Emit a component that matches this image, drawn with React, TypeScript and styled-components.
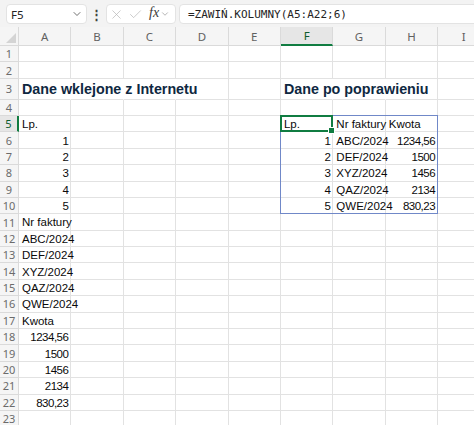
import styled, { createGlobalStyle } from 'styled-components';
import { ChevronDown, X, Check } from 'lucide-react';

const GlobalStyle = createGlobalStyle`
  html, body {
    margin: 0;
    padding: 0;
    background: #ffffff;
  }
  body {
    font-family: 'Liberation Sans', Arial, sans-serif;
  }
`;

const COLS = ['A', 'B', 'C', 'D', 'E', 'F', 'G', 'H', 'I'];
const ROW_COUNT = 23;
const ROW_H = 16.4;
const TITLE_ROW_H = 20.8;
const COL_W = 52.4;

type CellDef = {
  text: string;
  align?: 'left' | 'right';
  title?: boolean;
};

const invoices = ['ABC/2024', 'DEF/2024', 'XYZ/2024', 'QAZ/2024', 'QWE/2024'];
const amounts = ['1234,56', '1500', '1456', '2134', '830,23'];

const CELLS: Record<string, CellDef> = {
  A3: { text: 'Dane wklejone z Internetu', title: true },
  F3: { text: 'Dane po poprawieniu', title: true },
  A5: { text: 'Lp.' },
  A11: { text: 'Nr faktury' },
  A17: { text: 'Kwota' },
  F5: { text: 'Lp.' },
  G5: { text: 'Nr faktury' },
  H5: { text: 'Kwota' },
};
for (let i = 0; i < 5; i++) {
  CELLS[`A${6 + i}`] = { text: String(i + 1), align: 'right' };
  CELLS[`A${12 + i}`] = { text: invoices[i] };
  CELLS[`A${18 + i}`] = { text: amounts[i], align: 'right' };
  CELLS[`F${6 + i}`] = { text: String(i + 1), align: 'right' };
  CELLS[`G${6 + i}`] = { text: invoices[i] };
  CELLS[`H${6 + i}`] = { text: amounts[i], align: 'right' };
}

// cells whose right gridline is hidden by overflowing title text
const OVERFLOWED = new Set(['A3', 'B3', 'C3', 'F3', 'G3']);

const Page = styled.div`
  width: 474px;
  height: 425px;
  overflow: hidden;
  background: #ffffff;
`;

const Toolbar = styled.div`
  height: 27px;
  box-sizing: border-box;
  padding: 4px 0 3px 6px;
  display: flex;
  align-items: stretch;
  gap: 0;
  background: #f3f3f3;
`;

const FieldBox = styled.div<{ $width?: number }>`
  ${p => (p.$width ? `width: ${p.$width}px;` : 'flex: 1; margin-right: -12px;')}
  box-sizing: border-box;
  background: #ffffff;
  border: 1px solid #e3e3e3;
  border-radius: 4px;
  display: flex;
  align-items: center;
`;

const NameText = styled.span`
  flex: 1;
  padding-left: 4px;
  font-family: 'Noto Sans', 'Liberation Sans', sans-serif;
  font-size: 11.5px;
  color: #242424;
`;

const Dots = styled.div`
  width: 19px;
  display: flex;
  align-items: center;
  justify-content: center;
  font-size: 13px;
  font-weight: bold;
  color: #424242;
`;

const IconSlot = styled.span<{ $w: number; $tone?: string }>`
  width: ${p => p.$w}px;
  display: flex;
  align-items: center;
  justify-content: center;
  color: ${p => p.$tone ?? '#b4b4b4'};
`;

const FxText = styled.span`
  font-family: 'Liberation Serif', 'Times New Roman', serif;
  font-style: italic;
  font-size: 14px;
  color: #3b3b3b;
  padding: 0 1px 2px 4px;
`;

const Spacer = styled.div`
  width: 3px;
`;

const FormulaText = styled.span`
  padding-left: 8px;
  font-family: 'DejaVu Sans Mono', monospace;
  font-size: 11px;
  color: #242424;
  white-space: nowrap;
`;

const Sheet = styled.div`
  display: grid;
  grid-template-columns: 19px repeat(${COLS.length}, ${COL_W}px);
  grid-template-rows: 19px repeat(2, ${ROW_H}px) ${TITLE_ROW_H}px repeat(${ROW_COUNT - 3}, ${ROW_H}px);
`;

const Corner = styled.div`
  grid-column: 1;
  grid-row: 1;
  background: #f5f5f5;
  border-right: 1px solid #dadada;
  border-bottom: 1px solid #dadada;
  box-sizing: border-box;
  display: flex;
  align-items: flex-end;
  justify-content: flex-end;
  padding: 0 2px 2px 0;
`;

const CornerTriangle = styled.div`
  width: 0;
  height: 0;
  border-left: 10px solid transparent;
  border-bottom: 10px solid #d4d4d4;
`;

const ColHeader = styled.div<{ $active?: boolean }>`
  grid-row: 1;
  background: ${p => (p.$active ? '#e6e6e6' : '#f5f5f5')};
  border-right: 1px solid #dadada;
  border-bottom: ${p => (p.$active ? '2px solid #107c41' : '1px solid #dadada')};
  box-sizing: border-box;
  display: flex;
  align-items: center;
  justify-content: center;
  font-family: 'Noto Sans', 'Liberation Sans', sans-serif;
  font-size: 11.5px;
  color: ${p => (p.$active ? '#0e5c2f' : '#616161')};
`;

const RowHeader = styled.div<{ $active?: boolean }>`
  grid-column: 1;
  background: ${p => (p.$active ? '#e6e6e6' : '#f5f5f5')};
  border-right: ${p => (p.$active ? '2px solid #107c41' : '1px solid #dadada')};
  border-bottom: 1px solid #dadada;
  box-sizing: border-box;
  display: flex;
  align-items: center;
  justify-content: center;
  font-family: 'Noto Sans', 'Liberation Sans', sans-serif;
  font-size: 11px;
  color: ${p => (p.$active ? '#0e5c2f' : '#6b6b6b')};
`;

const Cell = styled.div<{ $align: 'left' | 'right'; $title?: boolean; $noRight?: boolean }>`
  min-width: 0;
  box-sizing: border-box;
  border-right: 1px solid ${p => (p.$noRight ? 'transparent' : '#e2e2e2')};
  border-bottom: 1px solid #e2e2e2;
  display: flex;
  align-items: flex-end;
  justify-content: ${p => (p.$align === 'right' ? 'flex-end' : 'flex-start')};
  padding: ${p => (p.$title ? '0 0 1px 3px' : '0 2px 0 3px')};
  white-space: nowrap;
  overflow: visible;
  z-index: ${p => (p.$title ? 2 : 1)};
  font-size: ${p => (p.$title ? '14.3px' : '11.5px')};
  font-weight: ${p => (p.$title ? 700 : 400)};
  color: ${p => (p.$title ? '#0e2841' : '#0a0a0a')};
  line-height: 1.15;
  letter-spacing: ${p => (p.$align === 'right' ? '-0.5px' : '0')};
`;

const SpillFrame = styled.div`
  grid-column: 7 / 10;
  grid-row: 6 / 12;
  margin: -1px 0 0 -1px;
  border: 1px solid #7088c8;
  z-index: 3;
  pointer-events: none;
`;

const Selection = styled.div`
  grid-column: 7 / 8;
  grid-row: 6 / 7;
  position: relative;
  margin: -1px 0 0 -1px;
  border: 2px solid #107c41;
  z-index: 4;
  pointer-events: none;
`;

const FillHandle = styled.div`
  position: absolute;
  right: -4px;
  bottom: -4px;
  width: 5px;
  height: 5px;
  background: #107c41;
  border: 1px solid #ffffff;
`;

export default function App() {
  const rows = Array.from({ length: ROW_COUNT }, (_, i) => i + 1);

  return (
    <Page>
      <GlobalStyle />
      <Toolbar>
        <FieldBox $width={81}>
          <NameText>F5</NameText>
          <IconSlot $w={18} $tone="#4a4a4a">
            <ChevronDown size={12} strokeWidth={1.6} />
          </IconSlot>
        </FieldBox>
        <Dots>⋮</Dots>
        <FieldBox $width={70}>
          <IconSlot $w={19}>
            <X size={15} strokeWidth={1.1} />
          </IconSlot>
          <IconSlot $w={19}>
            <Check size={15} strokeWidth={1.1} />
          </IconSlot>
          <FxText>fx</FxText>
          <IconSlot $w={10} $tone="#8a8a8a">
            <ChevronDown size={10} strokeWidth={1.5} />
          </IconSlot>
        </FieldBox>
        <Spacer />
        <FieldBox>
          <FormulaText>=ZAWIŃ.KOLUMNY(A5:A22;6)</FormulaText>
        </FieldBox>
      </Toolbar>

      <Sheet>
        <Corner>
          <CornerTriangle />
        </Corner>
        {COLS.map((c, i) => (
          <ColHeader key={c} $active={c === 'F'} style={{ gridColumn: i + 2 }}>
            {c}
          </ColHeader>
        ))}
        {rows.map(r => (
          <RowHeader key={`r${r}`} $active={r === 5} style={{ gridRow: r + 1 }}>
            {r}
          </RowHeader>
        ))}
        {rows.map(r =>
          COLS.map((c, ci) => {
            const ref = `${c}${r}`;
            const def = CELLS[ref];
            return (
              <Cell
                key={ref}
                $align={def?.align ?? 'left'}
                $title={def?.title}
                $noRight={OVERFLOWED.has(ref)}
                style={{ gridColumn: ci + 2, gridRow: r + 1 }}
              >
                {def?.text}
              </Cell>
            );
          })
        )}
        <SpillFrame />
        <Selection>
          <FillHandle />
        </Selection>
      </Sheet>
    </Page>
  );
}
